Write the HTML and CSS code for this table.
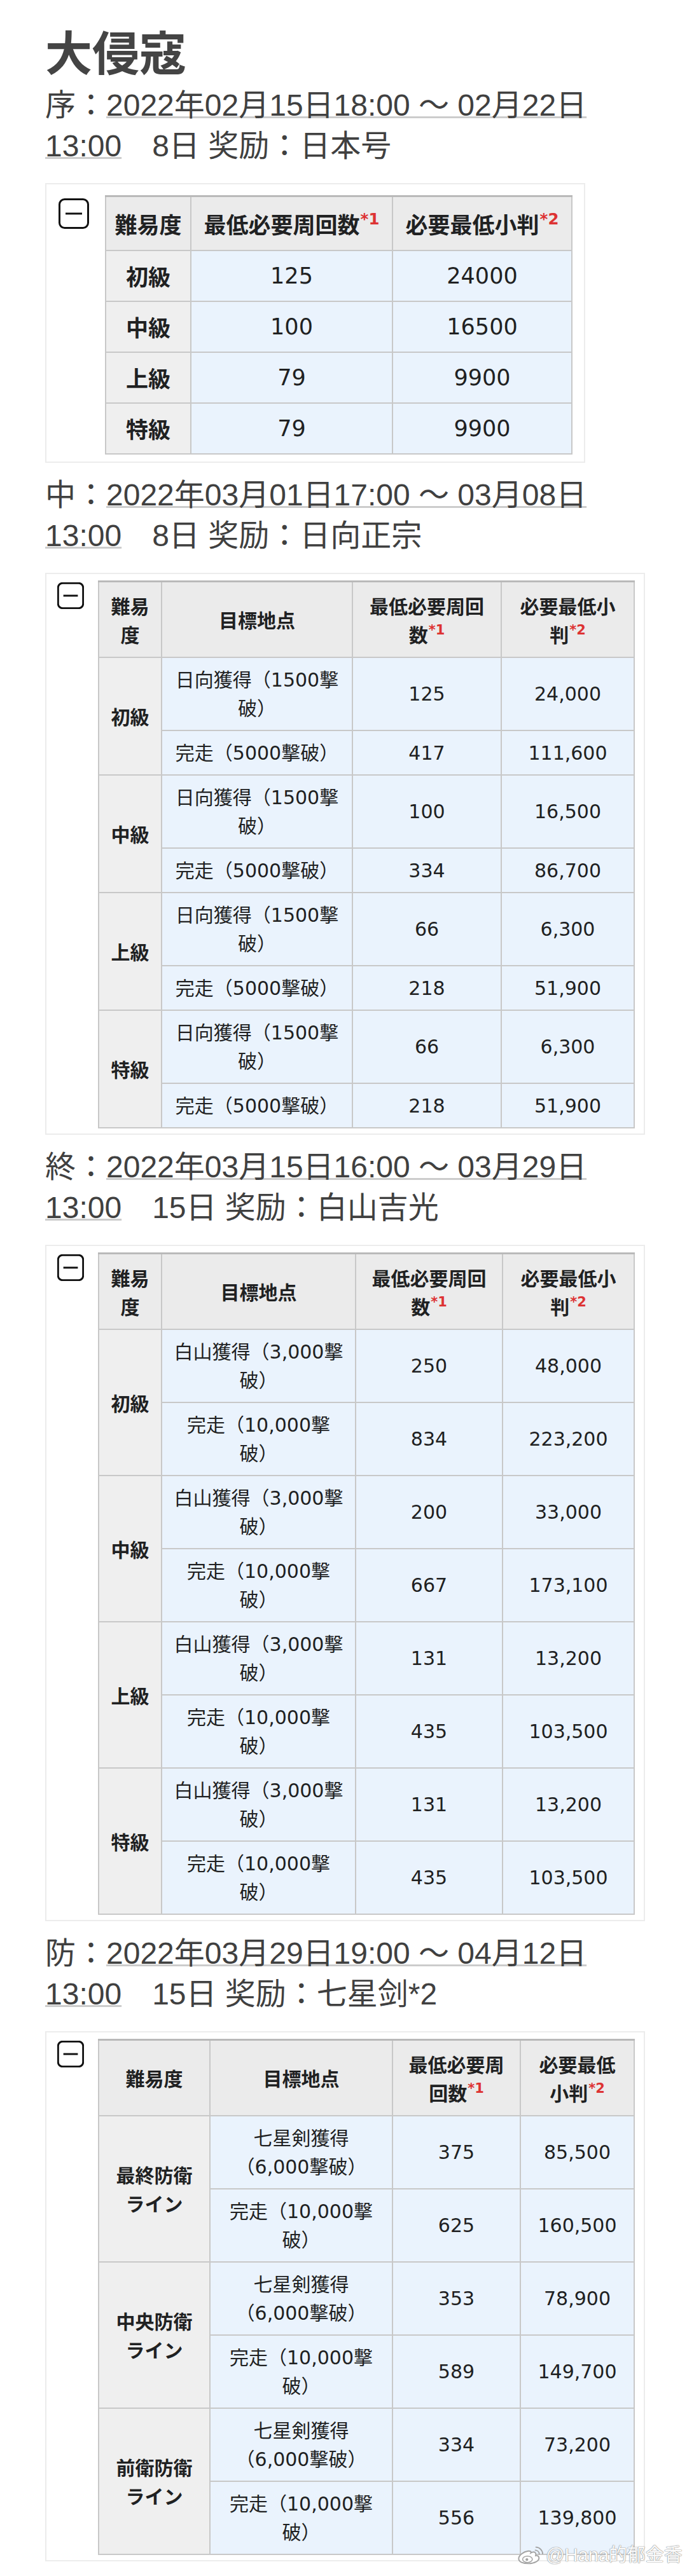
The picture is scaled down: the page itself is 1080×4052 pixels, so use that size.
FILE: index.html
```html
<!DOCTYPE html>
<html lang="ja">
<head>
<meta charset="utf-8">
<title>大侵寇</title>
<link rel="stylesheet" href="styles.css">
</head>
<body>
<div class="page">
  <h1 class="title">大侵寇</h1>

  <p class="period">序：<span class="date">2022年02月15日18:00 ～ 02月22日<br>13:00</span>&emsp;8日 奖励：日本号</p>
  <div class="card card-sm">
    <svg class="toggle toggle-lg" viewBox="0 0 48 48"><rect x="1.5" y="1.5" width="45" height="45" rx="8" fill="none" stroke="#111" stroke-width="3"/><line x1="11" y1="24" x2="37" y2="24" stroke="#111" stroke-width="3"/></svg>
    <table class="tbl tbl-lg t1">
      <colgroup><col class="c1"><col class="c2"><col class="c3"></colgroup>
      <tr><th>難易度</th><th>最低必要周回数<sup>*1</sup></th><th>必要最低小判<sup>*2</sup></th></tr>
      <tr><th class="rh">初級</th><td>125</td><td>24000</td></tr>
      <tr><th class="rh">中級</th><td>100</td><td>16500</td></tr>
      <tr><th class="rh">上級</th><td>79</td><td>9900</td></tr>
      <tr><th class="rh">特級</th><td>79</td><td>9900</td></tr>
    </table>
  </div>

  <p class="period">中：<span class="date">2022年03月01日17:00 ～ 03月08日<br>13:00</span>&emsp;8日 奖励：日向正宗</p>
  <div class="card card-lg">
    <svg class="toggle" viewBox="0 0 48 48"><rect x="1.5" y="1.5" width="45" height="45" rx="8" fill="none" stroke="#111" stroke-width="3.4"/><line x1="11" y1="24" x2="37" y2="24" stroke="#111" stroke-width="3.4"/></svg>
    <table class="tbl t2">
      <colgroup><col class="c1"><col class="c2"><col class="c3"><col class="c4"></colgroup>
      <tr><th>難易<br>度</th><th>目標地点</th><th>最低必要周回<br>数<sup>*1</sup></th><th>必要最低小<br>判<sup>*2</sup></th></tr>
      <tr><th class="rh" rowspan="2">初級</th><td>日向獲得（1500撃<br>破）</td><td>125</td><td>24,000</td></tr>
      <tr><td>完走（5000撃破）</td><td>417</td><td>111,600</td></tr>
      <tr><th class="rh" rowspan="2">中級</th><td>日向獲得（1500撃<br>破）</td><td>100</td><td>16,500</td></tr>
      <tr><td>完走（5000撃破）</td><td>334</td><td>86,700</td></tr>
      <tr><th class="rh" rowspan="2">上級</th><td>日向獲得（1500撃<br>破）</td><td>66</td><td>6,300</td></tr>
      <tr><td>完走（5000撃破）</td><td>218</td><td>51,900</td></tr>
      <tr><th class="rh" rowspan="2">特級</th><td>日向獲得（1500撃<br>破）</td><td>66</td><td>6,300</td></tr>
      <tr><td>完走（5000撃破）</td><td>218</td><td>51,900</td></tr>
    </table>
  </div>

  <p class="period">終：<span class="date">2022年03月15日16:00 ～ 03月29日<br>13:00</span>&emsp;15日 奖励：白山吉光</p>
  <div class="card card-lg">
    <svg class="toggle" viewBox="0 0 48 48"><rect x="1.5" y="1.5" width="45" height="45" rx="8" fill="none" stroke="#111" stroke-width="3.4"/><line x1="11" y1="24" x2="37" y2="24" stroke="#111" stroke-width="3.4"/></svg>
    <table class="tbl t3">
      <colgroup><col class="c1"><col class="c2"><col class="c3"><col class="c4"></colgroup>
      <tr><th>難易<br>度</th><th>目標地点</th><th>最低必要周回<br>数<sup>*1</sup></th><th>必要最低小<br>判<sup>*2</sup></th></tr>
      <tr><th class="rh" rowspan="2">初級</th><td>白山獲得（3,000撃<br>破）</td><td>250</td><td>48,000</td></tr>
      <tr><td>完走（10,000撃<br>破）</td><td>834</td><td>223,200</td></tr>
      <tr><th class="rh" rowspan="2">中級</th><td>白山獲得（3,000撃<br>破）</td><td>200</td><td>33,000</td></tr>
      <tr><td>完走（10,000撃<br>破）</td><td>667</td><td>173,100</td></tr>
      <tr><th class="rh" rowspan="2">上級</th><td>白山獲得（3,000撃<br>破）</td><td>131</td><td>13,200</td></tr>
      <tr><td>完走（10,000撃<br>破）</td><td>435</td><td>103,500</td></tr>
      <tr><th class="rh" rowspan="2">特級</th><td>白山獲得（3,000撃<br>破）</td><td>131</td><td>13,200</td></tr>
      <tr><td>完走（10,000撃<br>破）</td><td>435</td><td>103,500</td></tr>
    </table>
  </div>

  <p class="period">防：<span class="date">2022年03月29日19:00 ～ 04月12日<br>13:00</span>&emsp;15日 奖励：七星剑*2</p>
  <div class="card card-lg">
    <svg class="toggle" viewBox="0 0 48 48"><rect x="1.5" y="1.5" width="45" height="45" rx="8" fill="none" stroke="#111" stroke-width="3.4"/><line x1="11" y1="24" x2="37" y2="24" stroke="#111" stroke-width="3.4"/></svg>
    <table class="tbl t4">
      <colgroup><col class="c1"><col class="c2"><col class="c3"><col class="c4"></colgroup>
      <tr><th>難易度</th><th>目標地点</th><th>最低必要周<br>回数<sup>*1</sup></th><th>必要最低<br>小判<sup>*2</sup></th></tr>
      <tr><th class="rh" rowspan="2">最終防衛<br>ライン</th><td>七星剣獲得<br>（6,000撃破）</td><td>375</td><td>85,500</td></tr>
      <tr><td>完走（10,000撃<br>破）</td><td>625</td><td>160,500</td></tr>
      <tr><th class="rh" rowspan="2">中央防衛<br>ライン</th><td>七星剣獲得<br>（6,000撃破）</td><td>353</td><td>78,900</td></tr>
      <tr><td>完走（10,000撃<br>破）</td><td>589</td><td>149,700</td></tr>
      <tr><th class="rh" rowspan="2">前衛防衛<br>ライン</th><td>七星剣獲得<br>（6,000撃破）</td><td>334</td><td>73,200</td></tr>
      <tr><td>完走（10,000撃<br>破）</td><td>556</td><td>139,800</td></tr>
    </table>
  </div>

  <div class="watermark">
    <svg class="wb-logo" viewBox="0 0 44 30">
      <path d="M18 8 C10 9 2.5 15 2.5 20.5 C2.5 26 10 28.5 19 28.5 C29 28.5 36 24 36 19.5 C36 16.5 33.5 15 30.5 15.5 C31.5 12 30 9.5 27 9.5 C25 9.5 22.5 11 22.5 11 C23.5 8.5 21.5 7.5 18 8 Z" fill="#fff" stroke="#a3a3a3" stroke-width="2"/>
      <ellipse cx="17" cy="21.5" rx="8" ry="5.2" fill="#fff" stroke="#a3a3a3" stroke-width="1.6"/>
      <circle cx="16" cy="22" r="2.2" fill="#a3a3a3"/>
      <path d="M30 6.5 A7 7 0 0 1 36.5 13" stroke="#a3a3a3" stroke-width="2" fill="none" stroke-linecap="round"/>
      <path d="M31 1.5 A11.5 11.5 0 0 1 42 12.5" stroke="#a3a3a3" stroke-width="2" fill="none" stroke-linecap="round"/>
    </svg>
    <span class="wb-text">@Hana的郁金香</span>
  </div>
</div>
</body>
</html>
```

FILE: styles.css
```css
html, body {
  margin: 0;
  padding: 0;
  background: #ffffff;
}

.page {
  position: relative;
  padding: 36px 0 30px 71px;
  color: #444444;
}

.title {
  margin: 0;
  font-family: "Noto Sans CJK SC", sans-serif;
  font-weight: 700;
  font-size: 74px;
  line-height: 86px;
  color: #444444;
}

.period {
  margin: 19px 0 26px;
  font-family: "Liberation Sans", "Noto Sans CJK SC", sans-serif;
  font-weight: 400;
  font-size: 48px;
  line-height: 64px;
  color: #404040;
  white-space: nowrap;
}

.title + .period {
  margin-top: 12px;
}

.date {
  text-decoration: underline;
  text-decoration-color: #cccccc;
  text-decoration-thickness: 3px;
  text-underline-offset: 1px;
  text-decoration-skip-ink: none;
}

.card {
  display: flex;
  align-items: flex-start;
  box-sizing: border-box;
  border: 2px solid #ececec;
  background: #ffffff;
}

.card-sm {
  width: 849px;
  padding: 17px 0 11px 19px;
  gap: 25px;
}

.card-lg {
  width: 943px;
  padding: 10px 0 8px 17px;
  gap: 22px;
}

.toggle {
  flex: none;
  width: 42px;
  height: 42px;
  margin-top: 3px;
}

.toggle-lg {
  width: 48px;
  height: 48px;
  margin-top: 5px;
}

.tbl {
  flex: none;
  border-collapse: collapse;
  table-layout: fixed;
  width: 842px;
  font-family: "DejaVu Sans", "Noto Sans CJK JP", sans-serif;
  font-size: 30px;
  line-height: 45px;
  color: #202122;
  border-top: 3px solid #b9b9b9;
}

.tbl th,
.tbl td {
  border: 2px solid #c8c8c8;
  text-align: center;
  vertical-align: middle;
  padding: 11.5px 6px;
  white-space: nowrap;
}

.tbl th {
  background: #ebebeb;
  font-weight: 700;
  padding-top: 13.5px;
  padding-bottom: 13.5px;
  font-family: "Noto Sans CJK JP", sans-serif;
}

.tbl th.rh {
  background: #efefef;
  padding-top: 11.5px;
  padding-bottom: 11.5px;
}

.tbl td {
  background: #eaf3fd;
  font-weight: 400;
}

.tbl sup {
  font-family: "DejaVu Sans", sans-serif;
  font-size: 0.7em;
  line-height: 0;
  vertical-align: 0.55em;
  margin-left: 1px;
  color: #dd3333;
  font-weight: 700;
}

.tbl-lg {
  width: 733px;
  font-size: 35px;
  line-height: 52px;
}

.tbl-lg th,
.tbl-lg td {
  padding: 13px 6px;
}

.tbl-lg th {
  padding-top: 15.5px;
  padding-bottom: 15.5px;
}

.tbl-lg th.rh {
  padding-top: 13px;
  padding-bottom: 13px;
}

.t1 .c1 { width: 134px; }
.t1 .c2 { width: 317px; }
.t1 .c3 { width: 282px; }

.t2 .c1 { width: 99px; }
.t2 .c2 { width: 300px; }
.t2 .c3 { width: 234px; }
.t2 .c4 { width: 209px; }

.t3 .c1 { width: 99px; }
.t3 .c2 { width: 305px; }
.t3 .c3 { width: 231px; }
.t3 .c4 { width: 207px; }

.t4 .c1 { width: 175px; }
.t4 .c2 { width: 287px; }
.t4 .c3 { width: 201px; }
.t4 .c4 { width: 179px; }

.watermark {
  position: absolute;
  left: 813px;
  top: 4001px;
  display: flex;
  align-items: center;
  gap: 3px;
}

.wb-logo {
  width: 42px;
  height: 29px;
}

.wb-text {
  font-family: "Liberation Sans", "Noto Sans CJK SC", sans-serif;
  font-size: 29px;
  line-height: 36px;
  color: #fbfbfb;
  text-shadow: 0 0 1px #8a8a8a, 0 0 1px #8a8a8a, 0 0 2px #b0b0b0;
}
```
